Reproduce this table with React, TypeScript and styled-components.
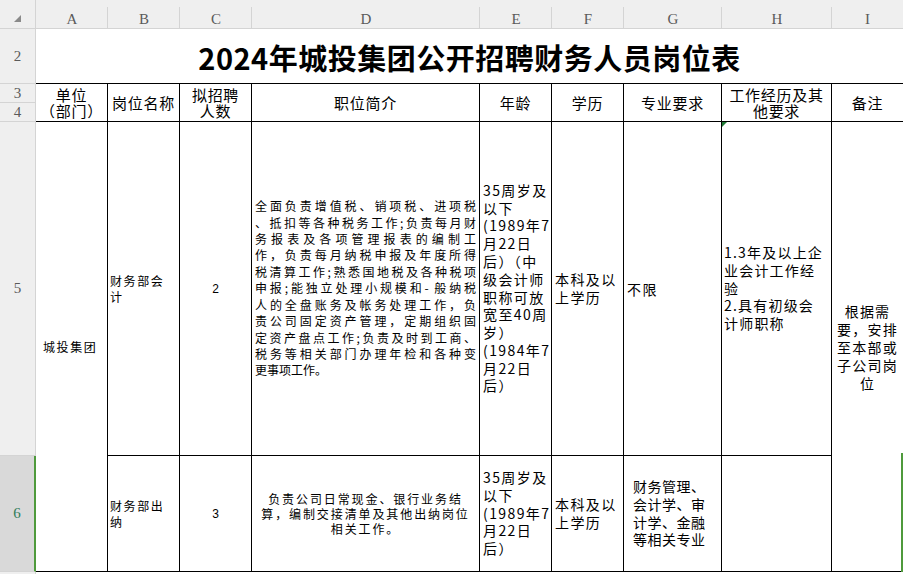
import React from 'react';
import styled, { createGlobalStyle, css } from 'styled-components';

const CJK = `"Noto Sans CJK SC", "Noto Sans", sans-serif`;
const HEAD_BG = '#efefef';
const GRID = '#d4d4d4';
const GREEN = '#4f9a3c';

const GlobalStyle = createGlobalStyle`
  html, body { margin: 0; padding: 0; background: #fff; overflow: hidden; }
  body { font-family: ${CJK}; }
  * { box-sizing: border-box; }
`;

type Place = { $c: number; $r: number; $cs?: number; $rs?: number };
const place = css<Place>`
  grid-column: ${p => p.$c} / span ${p => p.$cs ?? 1};
  grid-row: ${p => p.$r} / span ${p => p.$rs ?? 1};
`;

const Sheet = styled.div`
  position: relative;
  display: grid;
  grid-template-columns: 36px 72px 72px 72px 228px 72px 72px 98px 110px 71px;
  grid-template-rows: 29px 55px 19px 19px 334px 116px 1fr;
  width: 903px;
  height: 574px;
  overflow: hidden;
  font-family: ${CJK};
  color: #000;
`;

const Corner = styled.div`
  grid-column: 1;
  grid-row: 1;
  background: ${HEAD_BG};
  border-right: 1px solid ${GRID};
  border-bottom: 1px solid ${GRID};
  display: flex;
  align-items: flex-end;
  justify-content: flex-end;
  padding: 0 14px 6px 0;
`;

const CornerMark = styled.span`
  width: 0;
  height: 0;
  border-left: 7px solid transparent;
  border-bottom: 7px solid #8a8a8a;
`;

const ColHead = styled.div<{ $c: number; $last?: boolean }>`
  grid-column: ${p => p.$c};
  grid-row: 1;
  background: ${p =>
    p.$last
      ? HEAD_BG
      : `linear-gradient(${GRID}, ${GRID}) right 7px / 1px calc(100% - 7px) no-repeat, ${HEAD_BG}`};
  border-bottom: 1px solid ${GRID};
  display: flex;
  align-items: center;
  justify-content: center;
  padding-top: 10px;
  font-family: "Liberation Serif", "DejaVu Serif", serif;
  font-size: 15px;
  color: #5a5a5a;
`;

const RowHead = styled.div<{ $r: number; $rs?: number; $active?: boolean; $end?: boolean }>`
  grid-column: 1;
  grid-row: ${p => p.$r} / span ${p => p.$rs ?? 1};
  background: ${p => (p.$active ? '#d9d9d9' : HEAD_BG)};
  border-bottom: ${p => (p.$end ? 'none' : `1px solid ${GRID}`)};
  border-right: ${p => (p.$active ? `2px solid ${GREEN}` : `1px solid ${GRID}`)};
  display: flex;
  align-items: center;
  justify-content: center;
  font-family: "Liberation Serif", "DejaVu Serif", serif;
  font-size: 15px;
  color: ${p => (p.$active ? '#2f7d5a' : '#5a5a5a')};
`;

const Title = styled.h1`
  grid-column: 2 / span 9;
  grid-row: 2;
  margin: 0;
  padding-top: 1px;
  border-bottom: 1px solid #000;
  display: flex;
  align-items: center;
  justify-content: center;
  font-family: ${CJK};
  font-size: 29px;
  line-height: 34px;
  font-weight: 700;
  letter-spacing: 0.5px;
  color: #000;
`;

const Cell = styled.div<Place & { $open?: boolean; $center?: boolean; $pl?: number; $flag?: boolean }>`
  ${place}
  position: relative;
  border-right: ${p => (p.$open ? 'none' : '1px solid #000')};
  border-bottom: 1px solid #000;
  display: flex;
  flex-direction: column;
  justify-content: center;
  align-items: ${p => (p.$center ? 'center' : 'stretch')};
  text-align: ${p => (p.$center ? 'center' : 'left')};
  padding-left: ${p => p.$pl ?? 2}px;
  overflow: hidden;
  background: #fff;
  ${p =>
    p.$flag &&
    css`
      &::before {
        content: '';
        position: absolute;
        left: 0;
        top: 0;
        border-top: 5px solid #1f7a35;
        border-right: 5px solid transparent;
      }
    `}
`;

const Text = styled.div<{ $size?: number; $lh?: number; $ls?: number }>`
  font-size: ${p => p.$size ?? 14}px;
  line-height: ${p => p.$lh ?? 18}px;
  letter-spacing: ${p => p.$ls ?? 1.5}px;
`;

const Line = styled.div`
  white-space: nowrap;
`;

const Num = styled.span`
  font-family: "Liberation Sans", Arial, sans-serif;
  font-size: 12px;
`;

const Para = styled.div`
  width: 100%;
  padding-right: 3px;
  font-size: 12px;
  line-height: 16.4px;
`;

const JLine = styled.div<{ $last?: boolean }>`
  text-align: justify;
  text-align-last: ${p => (p.$last ? 'left' : 'justify')};
`;

const Filler = styled.div`
  grid-column: 2 / span 9;
  grid-row: 7;
  background: #fff;
`;

const SelectionEdge = styled.div`
  position: absolute;
  right: 0;
  top: 453px;
  width: 2px;
  height: 119px;
  background: ${GREEN};
`;

const LETTERS = ['A', 'B', 'C', 'D', 'E', 'F', 'G', 'H', 'I'];

const HEADERS: string[][] = [
  ['单位', '（部门）'],
  ['岗位名称'],
  ['拟招聘', '人数'],
  ['职位简介'],
  ['年龄'],
  ['学历'],
  ['专业要求'],
  ['工作经历及其', '他要求'],
  ['备注'],
];

const DESC5 = [
  '全面负责增值税、销项税、进项税',
  '、抵扣等各种税务工作;负责每月财',
  '务报表及各项管理报表的编制工',
  '作，负责每月纳税申报及年度所得',
  '税清算工作;熟悉国地税及各种税项',
  '申报;能独立处理小规模和- 般纳税',
  '人的全盘账务及帐务处理工作，负',
  '责公司固定资产管理，定期组织固',
  '定资产盘点工作;负责及时到工商、',
  '税务等相关部门办理年检和各种变',
  '更事项工作。',
];

const AGE5 = [
  '35周岁及',
  '以下',
  '(1989年7',
  '月22日',
  '后）（中',
  '级会计师',
  '职称可放',
  '宽至40周',
  '岁）',
  '(1984年7',
  '月22日',
  '后）',
];

const AGE6 = ['35周岁及', '以下', '(1989年7', '月22日', '后）'];

const Lines: React.FC<{ lines: string[] }> = ({ lines }) => (
  <>
    {lines.map((l, i) => (
      <Line key={i}>{l}</Line>
    ))}
  </>
);

export default function App() {
  return (
    <>
      <GlobalStyle />
      <Sheet>
        <Corner>
          <CornerMark />
        </Corner>
        {LETTERS.map((l, i) => (
          <ColHead key={l} $c={i + 2} $last={i === LETTERS.length - 1}>
            {l}
          </ColHead>
        ))}

        <RowHead $r={2}>2</RowHead>
        <RowHead $r={3}>3</RowHead>
        <RowHead $r={4}>4</RowHead>
        <RowHead $r={5}>5</RowHead>
        <RowHead $r={6} $active>
          6
        </RowHead>
        <RowHead $r={7} $end />

        <Title>2024年城投集团公开招聘财务人员岗位表</Title>

        {HEADERS.map((h, i) => (
          <Cell key={i} $c={i + 2} $r={3} $rs={2} $center $pl={0} $open={i === HEADERS.length - 1}>
            <Text $size={15} $lh={16} $ls={0.7}>
              <Lines lines={h} />
            </Text>
          </Cell>
        ))}

        <Cell $c={2} $r={5} $rs={2} $pl={7}>
          <Text $size={12} $ls={1.6} $lh={16}>
            <Line>城投集团</Line>
          </Text>
        </Cell>

        {/* Row 5 */}
        <Cell $c={3} $r={5}>
          <Text $size={12} $ls={1.6} $lh={16}>
            <Lines lines={['财务部会', '计']} />
          </Text>
        </Cell>
        <Cell $c={4} $r={5} $center $pl={0}>
          <Num>2</Num>
        </Cell>
        <Cell $c={5} $r={5} $pl={3}>
          <Para>
            {DESC5.map((l, i) => (
              <JLine key={i} $last={i === DESC5.length - 1}>
                {l}
              </JLine>
            ))}
          </Para>
        </Cell>
        <Cell $c={6} $r={5} $pl={3}>
          <Text $size={14} $lh={17.8} $ls={1.4}>
            <Lines lines={AGE5} />
          </Text>
        </Cell>
        <Cell $c={7} $r={5} $pl={3}>
          <Text $size={14} $lh={17.5} $ls={1.4}>
            <Lines lines={['本科及以', '上学历']} />
          </Text>
        </Cell>
        <Cell $c={8} $r={5} $pl={3}>
          <Text $size={14} $lh={18} $ls={1.4}>
            <Line>不限</Line>
          </Text>
        </Cell>
        <Cell $c={9} $r={5} $pl={2} $flag>
          <Text $size={14} $lh={17.8} $ls={1.2}>
            <Lines lines={['1.3年及以上企', '业会计工作经', '验', '2.具有初级会', '计师职称']} />
          </Text>
        </Cell>

        <Cell $c={10} $r={5} $rs={2} $center $pl={0} $open>
          <Text $size={14} $lh={18} $ls={1.2}>
            <Lines lines={['根据需', '要，安排', '至本部或', '子公司岗', '位']} />
          </Text>
        </Cell>

        {/* Row 6 */}
        <Cell $c={3} $r={6}>
          <Text $size={12} $ls={1.6} $lh={16}>
            <Lines lines={['财务部出', '纳']} />
          </Text>
        </Cell>
        <Cell $c={4} $r={6} $center $pl={0}>
          <Num>3</Num>
        </Cell>
        <Cell $c={5} $r={6} $center $pl={0}>
          <Text $size={12} $lh={15} $ls={1.9}>
            <Lines lines={['负责公司日常现金、银行业务结', '算，编制交接清单及其他出纳岗位', '相关工作。']} />
          </Text>
        </Cell>
        <Cell $c={6} $r={6} $pl={3}>
          <Text $size={14} $lh={17.8} $ls={1.4}>
            <Lines lines={AGE6} />
          </Text>
        </Cell>
        <Cell $c={7} $r={6} $pl={3}>
          <Text $size={14} $lh={17.5} $ls={1.4}>
            <Lines lines={['本科及以', '上学历']} />
          </Text>
        </Cell>
        <Cell $c={8} $r={6} $pl={9}>
          <Text $size={14} $lh={17.7} $ls={0.5}>
            <Lines lines={['财务管理、', '会计学、审', '计学、金融', '等相关专业']} />
          </Text>
        </Cell>
        <Cell $c={9} $r={6} />

        <Filler />
        <SelectionEdge />
      </Sheet>
    </>
  );
}
